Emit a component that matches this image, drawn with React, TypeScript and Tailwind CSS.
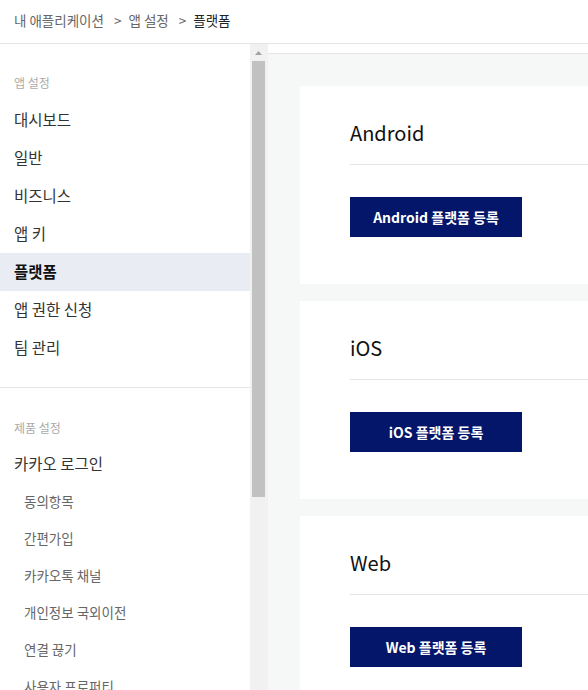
const appMenu = ["대시보드", "일반", "비즈니스", "앱 키", "플랫폼", "앱 권한 신청", "팀 관리"];
const loginSub = ["동의항목", "간편가입", "카카오톡 채널", "개인정보 국외이전", "연결 끊기", "사용자 프로퍼티", "보안"];
const platforms = ["Android", "iOS", "Web"];

const font = "font-['Noto_Sans_CJK_KR','Noto_Sans',sans-serif]";

const App = () => {
  return (
    <div className={`${font} w-[588px] h-[690px] overflow-hidden bg-white flex flex-col`}>
      {/* Breadcrumb */}
      <header className="h-[44px] shrink-0 border-b border-[#e5e5e5] flex items-center pl-[14px] pb-[3px] text-[13.5px] text-[#666]">
        <span>내 애플리케이션</span>
        <span className="ml-[10px] mr-[7px]">&gt;</span>
        <span>앱 설정</span>
        <span className="ml-[10px] mr-[7px]">&gt;</span>
        <span className="text-[#222]">플랫폼</span>
      </header>

      <div className="flex flex-1 min-h-0">
        {/* Sidebar */}
        <nav className="w-[250px] shrink-0 overflow-hidden">
          <div className="pt-[30px] pb-5 border-b border-[#e5e5e5]">
            <p className="h-[18px] leading-[18px] px-[14px] text-[12px] text-[#aaa] mb-[9px]">앱 설정</p>
            {appMenu.map((item) => (
              <div
                key={item}
                className={`h-[38px] flex items-center px-[14px] text-[15.5px] ${
                  item === "플랫폼" ? "bg-[#e9ecf3] font-bold text-[#111]" : "text-[#333]"
                }`}
              >
                {item}
              </div>
            ))}
          </div>
          <div className="pt-[31px]">
            <p className="h-[18px] leading-[18px] px-[14px] text-[12px] text-[#aaa] mb-2">제품 설정</p>
            <div className="h-[38px] flex items-center px-[14px] text-[15.5px] text-[#333]">카카오 로그인</div>
            {loginSub.map((item) => (
              <div key={item} className="h-[37px] flex items-center pl-6 text-[13.5px] text-[#666]">
                {item}
              </div>
            ))}
          </div>
        </nav>

        {/* Scrollbar */}
        <div className="w-[18px] shrink-0 bg-[#f1f1f1] flex flex-col">
          <div className="h-[17px] flex items-center justify-center pr-[2px]">
            <svg width="7" height="4" viewBox="0 0 7 4">
              <polygon points="3.5,0 7,4 0,4" fill="#a3a3a3" />
            </svg>
          </div>
          <div className="ml-[2px] w-[13px] h-[436px] bg-[#c1c1c1]" />
        </div>

        {/* Main */}
        <main className="flex-1 min-w-0 overflow-hidden bg-[#f6f7f7] flex flex-col">
          <div className="h-[10px] shrink-0 bg-white border-b border-[#e5e5e5]" />
          <div className="w-[700px] pt-8 pl-8 flex flex-col gap-[17px]">
            {platforms.map((name) => (
              <section key={name} className="bg-white pl-[50px] pt-[31px] pb-[47px]">
                <h2 className="h-8 leading-8 text-[20px] text-[#111]">{name}</h2>
                <div className="mt-[15px] h-px bg-[#e5e5e5]" />
                <button className="mt-8 w-[172px] h-10 bg-[#041669] text-white text-[14px] font-bold">
                  {name} 플랫폼 등록
                </button>
              </section>
            ))}
          </div>
        </main>
      </div>
    </div>
  );
};

export default App;
